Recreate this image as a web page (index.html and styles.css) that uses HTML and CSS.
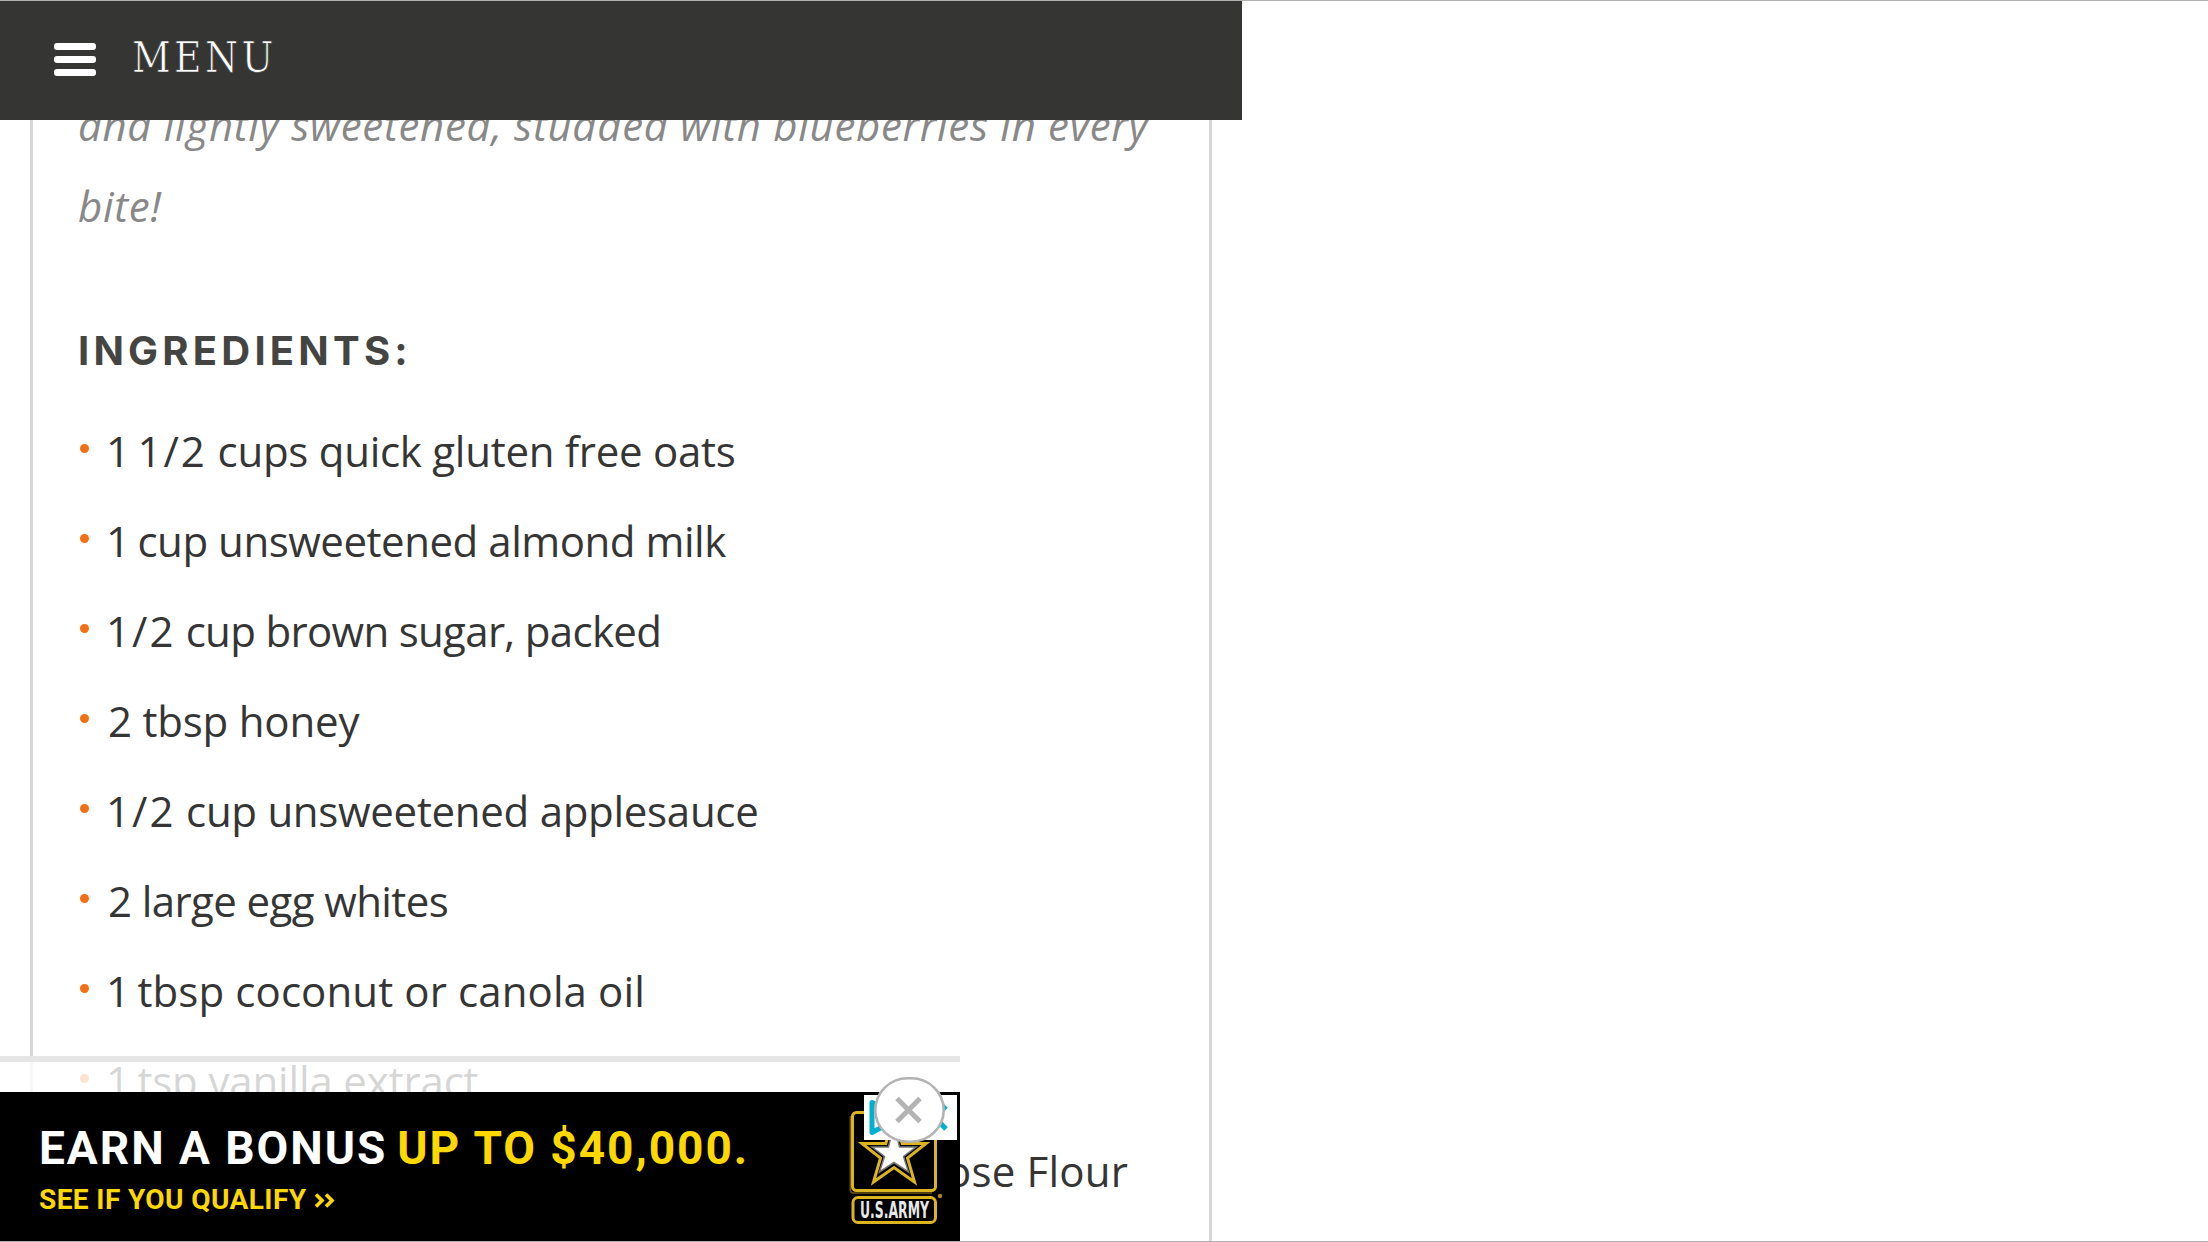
FILE: index.html
```html
<!DOCTYPE html>
<html lang="en">
<head>
<meta charset="utf-8">
<title>Recipe</title>
<link rel="stylesheet" href="styles.css">
</head>
<body>
<header class="topbar">
  <svg class="burger" width="42" height="33" viewBox="0 0 42 33" fill="#fff"><rect width="42" height="7" rx="3"/><rect y="13" width="42" height="7" rx="3"/><rect y="26" width="42" height="7" rx="3"/></svg>
  <span class="menu-label">MENU</span>
</header>

<main class="recipe">
  <p class="summary">and lightly sweetened, studded with blueberries in every<br>bite!</p>
  <h2 class="heading">INGREDIENTS:</h2>
  <ul class="ingredients">
    <li class="i1"><span class="one">1 </span><span class="frac">1/2</span> cups quick gluten free oats</li>
    <li class="i2"><span class="one">1 </span>cup unsweetened almond milk</li>
    <li class="i3"><span class="frac">1/2</span> cup brown sugar, packed</li>
    <li class="i4">2 tbsp honey</li>
    <li class="i5"><span class="frac">1/2</span> cup unsweetened applesauce</li>
    <li class="i6">2 large egg whites</li>
    <li class="i7"><span class="one">1 </span>tbsp coconut or canola oil</li>
    <li class="i8"><span class="one">1 </span>tsp vanilla extract</li>
    <li class="i9">ose Flour</li>
  </ul>
</main>

<aside class="ad">
  <div class="ad-veil"></div>
  <div class="banner">
    <div class="copy">
      <div class="offer"><span class="earn">EARN A BONUS</span><span class="amount">UP TO $40,000.</span></div>
      <div class="qualify"><span>SEE IF YOU QUALIFY</span><svg width="22" height="15" viewBox="0 0 22 15" fill="none" stroke="#ffd800" stroke-width="3.6"><path d="M2 1.5l6 6-6 6M12 1.5l6 6-6 6"/></svg></div>
    </div>
    <svg class="army" width="100" height="124" viewBox="0 0 100 124">
      <g fill="none" stroke="#dcb420">
        <rect x="6.500" y="8.500" width="83" height="78" rx="4" stroke-width="3"/>
        <path d="M4.300 12V86q0 3 3 3H86" stroke="#6b5710" stroke-width="1.500"/>
        <path d="M48 13l8.200 26.500H80L61.500 54l7 24L48 63.500 27.500 78l7-24L16 39.500h23.800z" stroke-width="3"/>
        <rect x="7" y="93.500" width="82.500" height="25" rx="5" stroke-width="3"/>
      </g>
      <path d="M48 20l5.500 23H70L57.500 52.500 62.500 68 48 58.500 33.500 68l5-15.500L26 43h16.500z" fill="#fff" stroke="#777" stroke-width="1.500"/>
      <circle cx="94" cy="92" r="2.200" fill="#a8891a"/>
      <text class="army-name" x="48.500" y="113.500" text-anchor="middle" textLength="69" lengthAdjust="spacingAndGlyphs">U.S.ARMY</text>
    </svg>
  </div>
  <svg class="choices" width="93" height="45" viewBox="0 0 93 45">
    <rect width="93" height="45" fill="#fff"/>
    <path d="M36 22.500L8 37.500V7.500z" fill="none" stroke="#00b0d2" stroke-width="5" stroke-linejoin="round"/>
    <path d="M60 11l22 23M60 34l22-23" stroke="#00b0d2" stroke-width="5"/>
  </svg>
  <svg class="close" width="71" height="66" viewBox="0 0 71 66">
    <rect x="1.300" y="1.300" width="68.400" height="63.400" rx="32.500" ry="31.700" fill="#fff" stroke="#b3b3b3" stroke-width="2.600"/>
    <path d="M23 21.500l23 23M46 21.500l-23 23" stroke="#b3b3b3" stroke-width="5"/>
  </svg>
</aside>
</body>
</html>
```
FILE: styles.css
```css
* { box-sizing: border-box; }

body {
  margin: 0;
  width: 2208px;
  height: 1242px;
  overflow: hidden;
  position: relative;
  background: #fff;
  border-top: 1px solid #b0b0b0;
  border-bottom: 1px solid #b0b0b0;
  font-family: "Open Sans", sans-serif;
}

.topbar {
  position: absolute;
  z-index: 2;
  left: 0;
  top: -1px;
  width: 1242px;
  height: 120px;
  padding: 0 0 5px 54px;
  display: flex;
  align-items: center;
  gap: 36px;
  background: #353633;
  border-top: 1px solid #242523;
}

.burger { margin-top: 3px; }

/* The stroke in the bar's colour thins the slab letters */
.menu-label {
  font: 42px/50px "DejaVu Serif Condensed", "DejaVu Serif", serif;
  font-stretch: condensed;
  letter-spacing: 3.4px;
  color: #fff;
  -webkit-text-stroke: 0.7px #353633;
}

.recipe {
  width: 1182px;
  height: 1240px;
  margin-left: 30px;
  padding: 83px 0 0 45px;
  border: solid #d6d6d6;
  border-width: 0 3px;
  overflow: hidden;
}

.summary {
  margin: 0 0 80px;
  font-size: 42px;
  line-height: 81px;
  font-style: italic;
  letter-spacing: 0.68px;
  color: #888;
  white-space: nowrap;
}

.heading {
  margin: 0 0 30px;
  font: 700 40px/50px Inter, sans-serif;
  letter-spacing: 4.2px;
  color: #444542;
}

.ingredients {
  margin: 0;
  padding: 0;
  list-style: none;
  font-size: 42px;
  line-height: 90px;
  color: #353535;
}

.ingredients li {
  display: flex;
  align-items: center;
  white-space: pre;
}

.ingredients li::before {
  content: "";
  width: 9px;
  height: 9px;
  margin: 0 17px 5px 2px;
  border-radius: 50%;
  background: #f37012;
}

.ingredients .i4::before,
.ingredients .i6::before { margin-right: 19px; }

.one { letter-spacing: -1.75px; }
.frac { letter-spacing: 2px; }
.i1 { letter-spacing: -0.26px; }
.i2 { letter-spacing: -0.46px; }
.i3 { letter-spacing: -0.68px; }
.i4 { letter-spacing: -0.2px; }
.i5 { letter-spacing: -0.29px; }
.i6 { letter-spacing: -0.6px; }
.i7 { letter-spacing: 0.11px; }
.i8 { letter-spacing: -0.15px; }
.ingredients .i9 { padding-left: 840px; letter-spacing: 0.2px; }

.ad {
  position: absolute;
  z-index: 1;
  left: 0;
  top: 1055px;
  width: 960px;
}

.ad-veil {
  height: 36px;
  border-top: 6px solid #e6e6e6;
  background: rgba(255, 255, 255, 0.8);
}

.banner {
  height: 150px;
  padding: 29px 14px 0 39px;
  display: flex;
  justify-content: space-between;
  background: #000;
}

.copy { font-family: Roboto, sans-serif; font-weight: 700; }

.offer {
  display: flex;
  gap: 10px;
  font-size: 46px;
  line-height: 54px;
  letter-spacing: 1.97px;
  color: #fff;
}

.amount { color: #ffd800; }

.qualify {
  display: flex;
  align-items: center;
  gap: 8px;
  margin-top: 8px;
  font-size: 28px;
  line-height: 34px;
  letter-spacing: 0.4px;
  color: #ffd800;
}

.army { margin-top: -17px; }

.army-name {
  font: 700 23px "DejaVu Sans Condensed", "DejaVu Sans", sans-serif;
  fill: #e8e8e8;
}

.choices {
  position: absolute;
  left: 864px;
  top: 39px;
}

.close {
  position: absolute;
  left: 874px;
  top: 21px;
}
```
